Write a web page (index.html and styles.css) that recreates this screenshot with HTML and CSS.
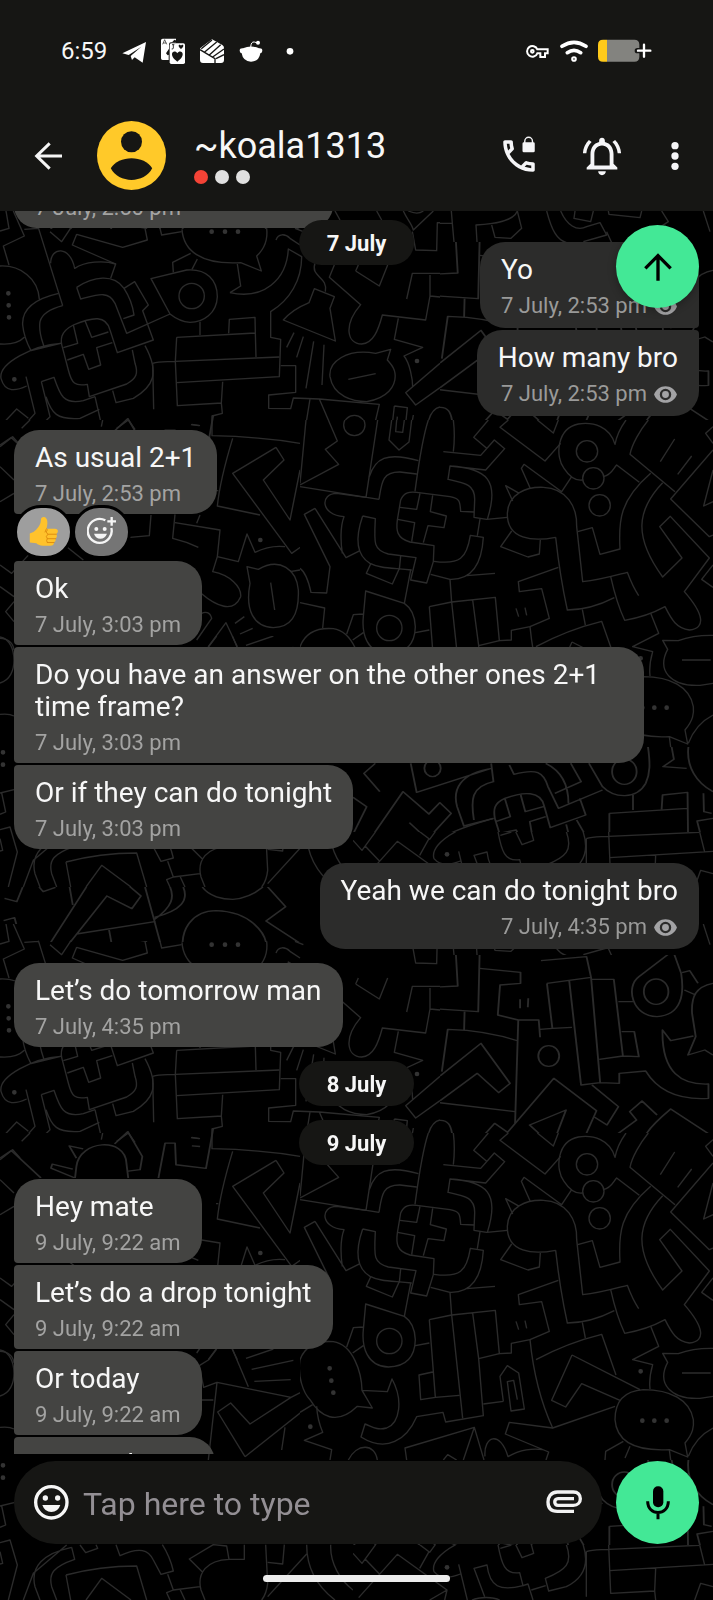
FILE: index.html
```html
<!DOCTYPE html>
<html lang="en">
<head>
    <meta charset="utf-8">
    <meta name="viewport" content="width=device-width, initial-scale=1">
    <title>~koala1313</title>
    <link rel="stylesheet" href="styles.css">
</head>
<body>
    <svg class="wallpaper" aria-hidden="true">
        <defs>
            <path id="frames" d="M270 722 L310 768 L290 806 L235 768 L134 942 L108 915 L190 741 M153 741 L160 795 M319 741 L340 845 L168 882 M340 845 L356 925 L400 908 M240 870 L247 922 L322 905 L320 940 L268 960 L160 935 L170 920 M403 741 C415 780 400 810 340 832 M372 735 C385 770 380 800 338 840 M445 741 C460 770 490 778 512 778 C545 775 570 750 578 741 M405 950 C390 860 430 812 475 812 C550 815 590 880 586 930 M585 735 L628 800 L585 843 L702 947 L730 905 M605 935 C610 920 618 918 627 924 L670 960 M10 775 L37 785 L50 741 M86 741 L95 755 L122 742 M8 842 L32 833 L47 910"/>
            <pattern id="doodles" patternUnits="userSpaceOnUse" x="0" y="211" width="713" height="713">
                <g transform="translate(0 -211)">
                <!-- bug, speech bubble, pin, boxes, lamp, compass -->
                <svg x="0" y="211" width="440" height="209" viewBox="0 33 1320 627">
                    <path d="M18 33 L27 85 L0 93 M40 33 L73 108 L10 138 L27 195 M73 88 L115 85 M115 83 L188 317 M152 190 C152 140 210 135 224 205 C255 185 310 180 347 192 L332 235"/>
                    <path d="M0 198 C60 195 115 235 118 298 M0 432 C40 435 60 425 73 412 M188 317 C150 327 125 345 120 365 C115 400 130 430 131 437 M176 280 C110 295 65 325 68 375 C72 415 92 450 93 452 L182 430 C100 435 -5 490 3 535 C15 580 50 572 80 558"/>
                    <path d="M230 262 C280 230 340 220 372 265 C395 300 400 330 402 345 L370 356 M230 262 L242 297 C290 285 325 270 345 310 L380 400 L510 342 M372 265 L404 245 L445 315 L428 332 L460 420 L352 458 L330 390 C318 345 280 350 220 375 C180 395 180 420 188 445 L205 510 C215 550 225 560 262 553 L268 590 L380 552 C410 535 415 520 405 490 L397 450"/>
                    <path d="M220 375 L233 430 L190 443 M255 362 L275 412 L325 396 M202 480 L250 463 L266 508 L302 495 L290 443 L337 428 M435 437 C480 520 460 560 400 595 L348 608 L338 572"/>
                    <path d="M78 530 L105 640 L65 685 M124 545 L150 650 L110 690 M124 545 L162 532 C180 585 190 615 250 602 L285 590 M138 590 C155 640 170 660 240 655 L298 628 M285 590 L308 690 M0 680 L50 627 L85 655"/>
                    <path d="M150 95 L185 125 L213 83 M230 103 L217 135 L347 192 M230 103 L368 142 L442 120 L435 85 M480 85 L485 105 L545 95"/>
                    <path d="M546 88 C550 150 600 195 722 188 L784 213 L770 168 C800 140 803 110 800 85 M572 160 L518 187 L520 217 M592 177 L576 208 M712 192 L722 258 L690 278"/>
                    <path d="M453 236 L560 210 C620 205 652 240 652 290 C650 340 610 367 570 367 C540 365 520 350 510 342 Z M690 278 C790 300 860 240 865 147 L905 170 C905 240 870 300 812 335 L812 412 L842 418 L838 530 L530 548"/>
                    <circle cx="575" cy="288" r="38"/>
                    <path d="M530 412 L766 399 M530 412 L526 484 L532 617 L665 609 M526 484 L838 471 M766 399 L768 471 M600 365 L600 405 M686 400 L688 358 L765 352 L766 399 M458 490 C480 484 500 486 526 484 M458 490 L461 628 M668 545 L664 609 L667 640 L636 648 L636 690"/>
                    <path d="M828 120 C835 100 855 100 870 115 L900 135 M885 85 L910 95 M945 190 C930 230 985 230 976 275 M943 266 L1003 290 L990 325 L1006 423 L850 360 C880 325 910 315 927 308 Z M882 398 L860 442 M910 410 L890 472 M941 424 L918 565 M972 434 L966 555"/>
                    <path d="M842 497 L887 497 L887 577 L806 585 L806 625 L872 626 L880 594 L958 597 L1138 613 L1120 690 M930 597 L915 690 M958 597 L998 690 M1005 33 L1020 60 M1130 33 L1145 60"/>
                    <circle cx="1063" cy="678" r="32"/>
                    <path d="M1003 195 L988 232 L1082 314 C1030 375 1040 430 1085 432 C1120 430 1135 390 1147 345 L1277 360 L1290 288 L1380 297 M1290 288 L1290 225 M1067 213 L1138 258 L1163 195 M1075 195 L1067 213 M1237 95 L1247 150 L1310 152 L1312 68 L1358 70 M1376 220 L1237 220 L1220 297 M1210 33 C1222 60 1235 70 1240 90 L1300 33 M1225 33 C1245 42 1260 40 1270 33"/>
                    <path d="M1172 448 L1127 460 C1040 445 985 485 990 530 C1000 590 1060 605 1100 605 C1160 595 1190 560 1185 520 C1183 500 1170 490 1162 480 Z M1045 538 L1127 521 M1195 355 L1183 418 L1268 442 L1212 468 C1230 490 1238 540 1238 560 M1320 490 L1217 578 L1247 615 L1320 563"/>
                    <path d="M1183 618 L1222 623 L1215 690 M1183 618 L1175 690 M1192 650 L1188 690 M1240 645 L1232 690 M1280 690 C1285 650 1300 625 1320 621"/>
                    <path class="dot" d="M25 280h0M26 316h0M27 352h0M43 538h0M635 95h0M675 95h0M714 95h0M1251 483h0"/>
                </svg>
                <svg x="45" y="211" width="285" height="18" viewBox="99 852 627 54" preserveAspectRatio="none">
                    <use href="#frames"/>
                </svg>
                <svg x="440" y="211" width="273" height="31" viewBox="0 33 819 93">
                    <path d="M0 70 L37 70 L34 33 M37 70 L42 126 M111 126 L108 75 C160 72 220 65 232 33 L245 85 L213 115 L165 112 L155 75 M320 33 C335 90 350 120 380 128 M362 33 C380 75 410 95 440 80 L480 68 L500 105 L430 125 M405 33 L402 55 L452 65 L460 33 M505 33 L507 43 L600 53 L605 33 M665 33 L685 65 L640 95 M500 95 L515 128 M790 33 L810 95"/>
                </svg>
                <!-- books, hill, diamond, pin -->
                <svg x="440" y="242" width="273" height="178" viewBox="968 45 600 534" preserveAspectRatio="none">
                    <path d="M1003 45 L1007 138 L945 142 M1055 45 L1052 215 L945 205 M1022 215 L1021 270 M1190 62 L1290 50 L1300 112 M1203 130 L1300 112 M1300 118 L1350 118 L1370 348 L1318 358 M1203 130 L1215 265 L1258 262 M1252 122 L1278 435 L1320 428 L1300 112 M1320 428 L1362 430 L1362 400 L1420 393 C1450 460 1500 480 1558 475 L1558 432 C1500 435 1455 400 1457 270 L1475 302 L1525 288 M1370 348 L1405 350 L1395 275 L1367 275 M1360 185 L1392 185"/>
                    <path d="M1480 32 L1405 110 C1375 140 1390 230 1445 230 C1500 225 1505 160 1498 100 Z M1500 98 L1517 92 L1535 130 M1505 150 L1530 165 M1568 130 C1530 140 1520 170 1522 220 L1530 290 L1513 345 L1550 330 L1568 345"/>
                    <ellipse cx="1443" cy="155" rx="27" ry="38"/>
                    <path d="M1055 85 L1145 97 L1145 130 L1100 135 L1095 225 L1140 240 L1185 240 L1188 292 M1188 268 L1215 265 M1144 178 L1144 205 M1162 175 L1161 202 M1140 240 L1133 550 M1140 303 C1090 280 1040 270 985 268 L972 395 M960 487 L1133 515 M968 408 L1058 310 L1122 430 L1097 458 L1050 400 L968 482"/>
                    <ellipse cx="1207" cy="348" rx="23" ry="31"/>
                    <path d="M1218 415 L1312 512 L1275 625 L1197 700 L1102 600 Z M1165 555 L1245 510 L1215 617 Z M1302 435 L1360 500 L1335 555 L1308 532 M1340 600 L1400 540 L1385 515 L1412 483 L1445 525 M1568 590 L1475 507 C1455 530 1430 560 1420 585 M1125 585 L1088 550 L1065 585 M968 541 C985 540 992 555 995 585"/>
                </svg>
                <!-- ring beetle, bird, clover, pencil, speech bubbles -->
                <svg x="300" y="420" width="413" height="327" viewBox="0 0 1239 981">
                    <path d="M18 0 L0 190 M85 0 L112 63 L76 88 L116 133 L0 195 M0 200 L237 238 M233 0 L198 232 M275 0 L267 60 L297 90 L327 66 L335 0 M290 0 L287 35 L308 37 L313 0"/>
                    <circle cx="163" cy="15" r="32"/>
                    <path d="M208 170 C225 115 260 95 355 122 M385 0 C365 60 355 140 345 214 M237 238 C245 190 245 155 300 156 L350 162 M460 0 C465 40 463 70 460 95 M430 95 L542 106 L583 60 L614 86 L557 150 L450 138 L444 178 C500 190 525 195 524 240 L522 292 L560 298 L622 292 M450 138 C560 145 600 180 562 298"/>
                    <path d="M198 232 L110 220 C60 220 60 285 132 290 C120 320 122 370 127 400 M45 265 L13 283 L90 440 L80 519 L33 517 C25 480 15 455 0 445 M45 265 L138 413 L180 392"/>
                    <path d="M188 288 L226 296 C222 370 220 390 265 402 L348 413 L332 480 L380 489 L400 425 L402 377 L330 366 C290 355 288 330 292 300 L302 240 C312 215 330 215 350 217 L450 230 C480 235 480 245 482 274 L522 276 M188 288 C170 340 160 400 210 430 C240 445 270 443 335 450"/>
                    <path d="M300 262 L350 268 L360 220 M293 298 L344 308 L335 365 M398 226 L391 275 L439 288 L432 323 L384 317 L370 368 M540 297 L532 347 M402 424 C480 435 500 415 511 346 L550 352 C545 440 510 480 450 478 L392 463 M500 467 L585 460 M450 478 L455 548 M302 408 L298 448 M213 430 L199 460 L277 492 L297 448 M332 450 L313 550"/>
                    <path d="M197 513 L313 550 C335 565 345 590 346 620 C345 660 330 700 265 702 C200 700 185 640 190 590 Z M190 582 L160 584 L140 642 M190 638 L158 660 M346 638 L388 630 M0 548 L74 564 L68 624"/>
                    <circle cx="268" cy="624" r="38"/>
                    <path d="M0 680 C15 640 50 622 100 626 C160 635 185 720 186 772 L217 825 L172 820 C110 880 60 850 30 800 C10 780 -8 730 0 680 M186 772 L262 776 L276 738 C310 800 300 870 260 885 C230 893 215 880 195 873 L183 912 C260 960 320 920 350 851 L429 838 L437 867 L550 848 L536 677 L598 662"/>
                    <path d="M388 560 L455 546 L586 532 L598 662 L634 660 L634 631 L690 620 L748 595 L725 506 L658 515 L655 485 L775 442 M388 560 L406 793 M455 546 L488 856 M518 540 L536 677 M406 793 L478 787 M398 717 L357 726 L362 800 L406 793 M648 565 L656 590 M675 563 L680 586"/>
                    <path d="M767 352 C700 365 620 360 622 280 C625 220 680 200 730 202 C800 205 832 260 830 320 L848 485 C900 480 950 465 982 457 Q998 500 1016 527 M767 352 Q780 470 802 570 C850 570 900 555 943 533 M658 220 L617 197 L638 243 M690 203 L664 145 L672 133 L785 215 L815 170 M635 333 L602 380 L684 411 L718 402 L721 360"/>
                    <path d="M978 0 C960 25 950 45 945 73 C930 20 880 5 835 12 C770 25 765 110 792 145 C815 180 835 182 848 180 M910 170 C935 165 940 145 950 135 L1018 187 M1045 0 C1020 30 995 75 990 103 L1125 215 M1239 90 L1112 237 L1228 350 L1239 345"/>
                    <circle cx="861" cy="94" r="32"/>
                    <circle cx="880" cy="175" r="32"/>
                    <circle cx="899" cy="256" r="32"/>
                    <path d="M1052 160 C960 240 955 300 960 387 L900 403 L877 323 L833 335 M1088 188 C1010 270 1000 350 1088 471 L1146 414 L1079 320 L1111 289 L1228 414 L1153 515 C1210 580 1220 625 1168 630 C1130 625 1115 600 1095 560 Q1040 590 974 601 Q950 550 932 470 M1081 125 L1124 57 M1133 163 L1175 108 M1239 150 L1211 258 L1239 245 M1239 435 L1205 478 L1239 502 M1239 70 L1217 40 L1239 20"/>
                    <path d="M625 0 L600 22 L735 123 L782 70 M712 0 L760 39 L775 0 M565 0 L521 52 L560 85 M847 568 L856 615 M708 680 Q800 630 905 604 L948 726 M690 620 Q705 770 758 885 L945 820 M1052 580 L1076 640 L998 680 L1058 695 C1048 730 1048 750 1050 768 M1239 646 Q1180 645 1135 662 L1088 661 L1103 688 C1070 750 1110 800 1200 796 L1239 790 M1146 720 L1232 720 M816 666 L1020 770 M816 666 L755 802 L797 822 L845 752 L960 802"/>
                    <path d="M1155 930 C1180 900 1182 880 1180 860 C1170 800 1110 770 1030 770 C960 775 945 820 945 860 C950 930 1010 955 1108 950 L1163 972 Z M610 805 L600 730 L622 698 L656 720 L673 828 L633 834 L622 746 L641 742 L652 800 M550 813 L610 805"/>
                    <path d="M0 838 L38 815 M50 820 Q52 860 68 898 L13 922 L95 950 L90 981 M490 981 L523 883 L315 945 L320 981 M523 883 L552 981 M555 970 C550 910 600 890 624 971 C660 950 700 945 728 950 M738 981 L746 957 L616 903 L628 868 L758 885 M430 981 L443 965 L470 981 M145 981 C170 930 225 930 232 981 M915 981 L917 955 L970 925 M990 940 L975 975 M1108 950 L1112 981 M1165 970 C1180 930 1210 900 1239 885"/>
                    <path class="dot" d="M89 706h0M94 743h0M100 779h0M1022 715h0M1027 863h0M1063 863h0M1100 863h0M31 881h0"/>
                </svg>
                <!-- trousers, key, compass -->
                <svg x="0" y="420" width="300" height="240" viewBox="0 0 900 720">
                    <path d="M308 0 L304 20 M350 25 L385 0 L405 28 M65 25 L90 0 M0 80 L38 50 L60 75 M636 0 L636 47 Q780 50 900 70 M698 55 Q660 180 652 258 L780 285 M575 13 L600 17 M648 212 L655 212 M828 82 L698 160 L875 400 L915 372 M828 82 L852 120 L790 180 L870 300 L900 150"/>
                    <path d="M600 285 L590 310 M525 283 L518 355 Q560 365 595 382 M525 308 L660 330 L652 410 L715 425 L741 342 L765 397 Q810 375 855 380 M652 410 L638 455 C690 465 725 500 722 530 C700 580 650 560 603 520 M390 352 L448 347 L453 285 M741 440 L775 448 C840 410 890 450 895 510 C898 590 870 622 820 623 C760 620 735 570 750 490 Z M812 488 L824 570 M870 455 L900 450"/>
                    <path d="M590 660 L635 595 C630 575 615 575 605 580 M625 680 L678 608 L712 680 M705 610 L733 590 M720 642 L758 625 M0 140 L42 180 M0 245 L42 220 M0 435 L35 460 L90 400 M0 500 L42 530 M42 545 L17 575 L42 605 M0 655 C25 655 40 670 42 690 M200 380 L250 420"/>
                    <path class="dot" d="M781 360h0"/>
                </svg>
                <svg x="0" y="407" width="216" height="58" viewBox="0 540 475 175" preserveAspectRatio="none">
                    <path d="M165 715 L168 680 C175 600 275 590 278 670 L282 715 M183 627 L152 618 L168 655 M160 688 L115 673 L112 685 L165 715 M252 612 L281 575 L313 650 L308 690 L282 694 M348 718 L363 610 L385 610 L387 675 L453 686 L469 565 M420 593 L438 596 M422 618 L440 620 M0 655 L25 632 L90 715"/>
                </svg>
                <svg x="0" y="636" width="300" height="111" viewBox="0 357 900 333">
                    <path d="M738 385 L820 357 M755 418 L880 391 M763 454 L872 449 M697 357 L745 470 M593 410 L625 390 L650 357 M598 410 L611 472 L651 457 L873 502 L910 483 M651 457 L625 690 M600 510 L640 510 M873 502 L750 582 L692 519 L653 546 L735 680 M935 522 L735 680 M855 592 L845 660 M0 360 C30 365 42 400 42 430 C42 460 30 490 0 498 M0 592 C20 590 35 593 42 597"/>
                </svg>
                <!-- picture frame, cat, stack -->
                <svg x="0" y="747" width="353" height="140" viewBox="0 120 1059 420">
                    <path d="M0 258 L42 248 M5 258 L17 315 L0 322 M0 368 L30 360 L52 435 L25 540 M0 395 L8 430 L0 432 M215 382 L224 418 C160 440 145 460 155 500 L170 540 M215 382 C130 400 90 440 105 500 L120 540 M70 540 L100 460 L200 375 M240 375 L257 398 L293 385 L288 374 M198 465 Q300 438 410 438 L440 540 M198 465 L212 540 M258 540 L305 475 L393 540 M348 374 L360 407 C420 380 445 390 460 420 L483 463 L520 453 Q510 410 487 374"/>
                    <path d="M503 463 L520 510 L500 518 L510 540 M540 508 L555 540 M520 510 L600 500 M608 457 L568 417 L640 374 L680 378 L687 418 L733 418 L733 374 M687 418 C620 420 590 460 603 510 L615 540 M797 374 L803 490 Q800 520 785 540 M853 374 L848 432 L803 427 M920 374 C920 430 940 490 1005 540 M992 374 C990 430 1020 480 1059 510 M920 402 L803 530"/>
                    <path class="dot" d="M9 136h0M9 173h0"/>
                </svg>
                <svg x="353" y="747" width="360" height="85" viewBox="776 321 792 255" preserveAspectRatio="none">
                    <path d="M825 370 L800 400 L835 455 M776 472 L806 500 L768 605 L797 630 L886 455 L943 522 L967 488 L992 520 L940 598 L900 548 M903 370 L916 457 L1080 385 M1080 370 L1085 425 C1035 440 1035 480 1042 540 M1082 385 C1010 400 995 450 1005 500 L1020 558 L1085 535"/>
                    <ellipse cx="951" cy="385" rx="18" ry="25"/>
                    <path d="M1120 375 L1130 403 C1180 385 1195 395 1205 440 L1228 505 L1325 450 M1200 370 C1230 390 1250 430 1250 490 M1255 370 L1278 425 L1220 460 M1275 475 L1288 525 L1210 563 L1197 500 C1190 450 1150 455 1110 475 C1085 490 1085 510 1088 535 L1105 610 M1110 475 L1122 530 L1090 545 M1145 465 L1155 515 L1195 500 M1098 580 L1135 570 L1150 612 M1172 600 L1165 545 L1200 530 M1268 540 L1285 580 M1245 553 L1250 580 M1085 535 C1060 545 1020 560 990 580"/>
                    <path d="M1295 370 L1325 440 C1350 475 1400 480 1420 430 C1430 400 1430 370 1425 321 M1392 465 L1392 510 M1455 508 L1457 465 L1512 457 L1513 576 M1340 520 L1512 505 M1340 520 L1340 580 M1568 225 C1500 260 1490 400 1568 455 M1547 460 L1548 515 L1565 520 M1568 535 L1533 543 L1540 580 M1477 321 L1482 358 L1458 380 L1510 385"/>
                    <ellipse cx="1373" cy="395" rx="27" ry="38"/>
                </svg>
                <svg x="353" y="832" width="360" height="55" viewBox="0 375 1080 165">
                    <path d="M767 375 L773 520 L905 513 M700 395 C720 388 740 390 767 388 L1038 376 M700 395 L700 530 M770 452 L1080 433 M1040 375 L1055 435 M908 445 L905 513 L908 540 M685 360 C710 420 700 470 640 500 L587 513 L577 475 C640 450 660 430 640 374 M488 374 L507 413 L542 400 L535 374 M435 374 C445 430 455 465 500 458 L510 497 C440 515 410 500 402 435 L363 445 L395 530 M442 385 L475 375"/>
                    <path d="M308 374 C260 400 235 430 243 455 C260 475 290 475 322 462 M317 433 L343 540 M535 510 L578 497 M510 497 L525 492 L540 540 M357 540 C380 530 420 530 440 540 M275 540 L282 510 L133 403 L17 533 M282 510 L230 540 M0 400 L27 430 L68 374 M37 418 L80 463 M200 374 L230 397 L247 374 M228 395 L200 445 M1080 500 L1043 490 L1025 540"/>
                    <path class="dot" d="M282 442h0"/>
                </svg>
                <svg x="0" y="887" width="713" height="37" viewBox="0 741 1568 111" preserveAspectRatio="none">
                    <use href="#frames"/>
                </svg>
                </g>
            </pattern>
        </defs>
        <rect width="100%" height="100%" fill="url(#doodles)"/>
    </svg>

    <header class="header">
        <div class="status">
            <span class="clock">6:59</span>
            <div class="status-icons">
                <svg width="24" height="26" viewBox="0 0 72 78"><path fill="#fff" d="M1 46 72 12 62 74 38 58 30 66 26 54 58 26 20 51Z"/></svg>
                <svg width="24" height="26" viewBox="0 0 72 78">
                    <path fill="#fff" d="M5 2h40v11H30q-6 0-6 6v13l-9 14 5 6 3-2v16H5q-5 0-5-5V7q0-5 5-5Z"/>
                    <path fill="none" stroke="#161614" stroke-width="2" d="M5 19 11 5 17 19M7 15h9"/>
                    <path fill="#161614" d="M36 10q5-8 9-2l3 5H33Z"/>
                    <rect x="26" y="16" width="46" height="62" rx="5" fill="#fff"/>
                    <path fill="#161614" d="M49 71C35 60 33 54 33 48c0-9 12-10 16-2 4-8 16-7 16 2 0 6-2 12-16 23ZM60 33c-8-6-9-13-4-13q3 0 4 3 1-3 4-3c5 0 4 7-4 13Z"/>
                    <path fill="none" stroke="#161614" stroke-width="2.500" d="M33 20h7M37 20v10q0 4-5 3"/>
                </svg>
                <svg width="24" height="26" viewBox="0 0 72 78">
                    <path fill="#fff" d="M5 27 36 4 67 21q5 3 5 9v36q0 9-9 9H9q-9 0-9-9V34q0-5 5-7Z"/>
                    <path fill="none" stroke="#161614" stroke-width="4" d="M0 35 45 62 45 78M14 42 50 12M28 51 62 20M38 57 72 33M4 32 36 6M48 62 72 50"/>
                </svg>
                <svg width="24" height="26" viewBox="0 0 72 78">
                    <path fill="#fff" d="M2 38q0-8 10-7 24-11 48 0 10-1 10 7 0 6-6 8-4 25-28 25T8 46q-6-2-6-8Z"/>
                    <path fill="none" stroke="#fff" stroke-width="3" d="M35 28Q36 10 46 12l10 3"/>
                    <circle cx="57" cy="14" r="6" fill="#fff"/>
                </svg>
                <svg width="24" height="26" viewBox="0 0 72 78"><circle cx="36" cy="40" r="10" fill="#fff"/></svg>
            </div>
            <div class="system-icons">
                <svg width="24" height="24" viewBox="0 0 72 72" fill="none" stroke="#fff" stroke-width="6">
                    <path d="M34 31A16 16 0 1 0 34 43H43V54H57V43H65V31Z"/>
                    <circle cx="19" cy="37" r="4"/>
                </svg>
                <svg width="28" height="24" viewBox="0 0 84 72" fill="none" stroke="#fff" stroke-width="11" stroke-linecap="round">
                    <path d="M6 22Q42-2 78 22M22 41Q42 27 62 41"/>
                    <circle cx="42" cy="60" r="3"/>
                </svg>
                <svg width="54" height="24" viewBox="0 0 162 72">
                    <path fill="#ffca1a" d="M27 2H15Q0 2 0 17v36q0 15 15 15h12Z"/>
                    <path fill="#83837f" d="M27 2h82q15 0 15 15v36q0 15-15 15H27Z"/>
                    <path stroke="#161614" stroke-width="16" stroke-linecap="round" d="M118 35h37M138 17v36"/>
                    <path stroke="#fff" stroke-width="7" stroke-linecap="round" d="M120 35h37M138 17v36"/>
                </svg>
            </div>
        </div>
        <div class="appbar">
            <button class="back" type="button" aria-label="Back">
                <svg width="28" height="28" viewBox="0 0 84 84" fill="none" stroke="#f5f5f5" stroke-width="9"><path d="M84 42H8M47 4 8 42l39 38"/></svg>
            </button>
            <svg class="avatar" width="69" height="69" viewBox="0 0 210 210">
                <circle cx="105" cy="105" r="105" fill="#ffc929"/>
                <circle cx="105" cy="63" r="32" fill="#161614"/>
                <path fill="#161614" d="M42 144C65 103 145 103 168 144 145 191 65 191 42 144Z"/>
            </svg>
            <div class="contact">
                <h1>~koala1313</h1>
                <div class="trust"><i class="on"></i><i></i><i></i></div>
            </div>
            <div class="actions">
                <button type="button" aria-label="Call">
                    <svg width="42" height="42" viewBox="0 0 24 24" fill="#f5f5f7">
                        <path d="M6.540 5c.06.89.21 1.760.45 2.590l-1.200 1.200c-.41-1.200-.67-2.470-.76-3.790h1.510m9.860 12.020c.85.24 1.720.39 2.600.45v1.490c-1.320-.09-2.590-.35-3.800-.75l1.200-1.190M7.500 3H4c-.55 0-1 .45-1 1 0 9.390 7.610 17 17 17 .55 0 1-.45 1-1v-3.490c0-.55-.45-1-1-1-1.240 0-2.450-.2-3.570-.57-.1-.04-.21-.05-.31-.05-.26 0-.51.1-.71.29l-2.200 2.200c-2.830-1.450-5.150-3.760-6.590-6.590l2.200-2.200c.28-.28.36-.67.25-1.020C8.700 6.450 8.500 5.250 8.500 4c0-.55-.45-1-1-1z"/>
                        <rect x="14" y="4.200" width="7" height="5.700" rx=".8"/>
                        <path fill="none" stroke="#f5f5f7" stroke-width=".8" d="M15.300 4.500V3.500a2.200 2.200 0 0 1 4.400 0v1"/>
                    </svg>
                </button>
                <button type="button" aria-label="Notifications">
                    <svg width="46" height="46" viewBox="0 0 24 24" fill="#f5f5f7"><path d="M12 22c1.100 0 2-.9 2-2h-4c0 1.100.9 2 2 2zm6-6v-5c0-3.070-1.630-5.640-4.500-6.320V4c0-.83-.67-1.500-1.500-1.500s-1.500.67-1.500 1.500v.68C7.640 5.360 6 7.920 6 11v5l-2 2v1h16v-1l-2-2zm-2 1H8v-6c0-2.480 1.510-4.500 4-4.500s4 2.020 4 4.500v6zM6.580 4.680L5.150 3.650C3.350 5.480 2.170 7.900 2.030 10.500h1.800c.15-2.250 1.310-4.370 2.750-5.820zm13.590 5.820h1.800c-.15-2.600-1.330-5.020-3.120-6.850l-1.420 1.030c1.420 1.450 2.590 3.570 2.740 5.820z"/></svg>
                </button>
                <button class="more" type="button" aria-label="More options">
                    <svg width="8" height="28" viewBox="0 0 24 84" fill="#f5f5f7"><circle cx="12" cy="11" r="11"/><circle cx="12" cy="42" r="11"/><circle cx="12" cy="73" r="11"/></svg>
                </button>
            </div>
        </div>
    </header>

    <svg width="0" height="0" class="sprite" aria-hidden="true">
        <symbol id="eye" viewBox="0 0 24 24">
            <path d="M12 4C7 4 2.730 7.110 1 12c1.730 4.890 6 8 11 8s9.270-3.110 11-8c-1.730-4.890-6-8-11-8zm0 13.500a5.500 5.500 0 1 1 0-11 5.500 5.500 0 0 1 0 11zm0-8.800a3.300 3.300 0 1 0 0 6.600 3.300 3.300 0 0 0 0-6.600z"/>
        </symbol>
        <symbol id="smile" viewBox="0 0 105 105">
            <circle cx="52" cy="52" r="47" fill="none" stroke="currentColor" stroke-width="10"/>
            <circle cx="34" cy="39" r="8"/>
            <circle cx="71" cy="39" r="8"/>
            <path d="M25 60h54q-7 21-27 21T25 60Z"/>
        </symbol>
    </svg>

    <main class="chat">
        <div class="messages">
            <section class="group in">
                <article class="bubble scrolled"><time>7 July, 2:50 pm</time></article>
            </section>
            <section class="group out">
                <article class="bubble"><p>Yo</p><time>7 July, 2:53 pm <svg class="seen"><use href="#eye"/></svg></time></article>
                <article class="bubble"><p>How many bro</p><time>7 July, 2:53 pm <svg class="seen"><use href="#eye"/></svg></time></article>
            </section>
            <section class="group in">
                <article class="bubble"><p>As usual 2+1</p><time>7 July, 2:53 pm</time></article>
                <div class="reactions">
                    <button class="picked" type="button" aria-label="Thumbs up">
                        <svg width="29" height="30" viewBox="0 0 90 94">
                            <path fill="#ffc22b" d="M2 52q12-3 20-12 14-13 15-31Q37 0 46 0c12 1 14 19 8 37h27q9 1 9 8 0 6-5 8 5 9-2 14 2 8-5 12 0 11-12 11H43q-15-2-20-8L2 80Z"/>
                            <path fill="none" stroke="#de8b10" stroke-width="3" stroke-linecap="round" d="M54 37 50 47M59 54h26M57 68h26M57 80h21M58 40q-9 6 1 14-9 7-2 14-5 6 0 12"/>
                        </svg>
                    </button>
                    <button type="button" aria-label="Add reaction">
                        <svg width="30" height="30" viewBox="0 0 90 90" fill="#f5f5f5">
                            <path fill="none" stroke="#f5f5f5" stroke-width="7" d="M55 10A36 36 0 1 0 73 33M74 0v26M61 13h26"/>
                            <circle cx="28" cy="36" r="6"/><circle cx="53" cy="36" r="6"/>
                            <path d="M21 50h39q-6 15-20 15T21 50Z"/>
                        </svg>
                    </button>
                </div>
                <article class="bubble"><p>Ok</p><time>7 July, 3:03 pm</time></article>
                <article class="bubble"><p>Do you have an answer on the other ones 2+1 time frame?</p><time>7 July, 3:03 pm</time></article>
                <article class="bubble"><p>Or if they can do tonight</p><time>7 July, 3:03 pm</time></article>
            </section>
            <section class="group out">
                <article class="bubble"><p>Yeah we can do tonight bro</p><time>7 July, 4:35 pm <svg class="seen"><use href="#eye"/></svg></time></article>
            </section>
            <section class="group in">
                <article class="bubble"><p>Let’s do tomorrow man</p><time>7 July, 4:35 pm</time></article>
            </section>
            <div class="date">8 July</div>
            <div class="date">9 July</div>
            <section class="group in">
                <article class="bubble"><p>Hey mate</p><time>9 July, 9:22 am</time></article>
                <article class="bubble"><p>Let’s do a drop tonight</p><time>9 July, 9:22 am</time></article>
                <article class="bubble"><p>Or today</p><time>9 July, 9:22 am</time></article>
                <article class="bubble"><p>Let me know</p><time>9 July, 9:22 am</time></article>
            </section>
        </div>
        <div class="date current">7 July</div>
        <button class="round scroll-up" type="button" aria-label="Scroll up">
            <svg width="28" height="28" viewBox="0 0 84 84" fill="none" stroke="#000" stroke-width="10"><path d="M42 83V8M4 46 42 8l38 38"/></svg>
        </button>
    </main>

    <form class="composer">
        <div class="field">
            <button type="button" aria-label="Emoji"><svg class="emoji"><use href="#smile"/></svg></button>
            <input type="text" placeholder="Tap here to type" aria-label="Message">
            <button type="button" aria-label="Attach file">
                <svg width="36" height="26" viewBox="0 0 108 78" fill="none" stroke="#f2f2f2" stroke-width="10"><path d="M84 64H34C12 64 6 50 6 36S14 6 34 6H82C96 6 103 15 103 26S95 46 82 46H36C23 46 23 26 36 26H84"/></svg>
            </button>
        </div>
        <button class="round" type="button" aria-label="Record voice message">
            <svg width="24" height="34" viewBox="0 0 72 102"><rect x="21" y="1" width="31" height="63" rx="15"/><path fill="none" stroke="#000" stroke-width="9" d="M5 46C5 91 67 91 67 46M36 79V100"/></svg>
        </button>
    </form>
    <div class="home"></div>
</body>
</html>
```
FILE: styles.css
```css
* {
  box-sizing: border-box;
}
body {
  margin: 0;
  height: 100vh;
  display: flex;
  flex-direction: column;
  overflow: hidden;
  background-color: #000;
  color: #f7f7f7;
  font-family: Roboto, "Liberation Sans", sans-serif;
}
button {
  display: flex;
  align-items: center;
  justify-content: center;
  padding: 0;
  border: 0;
  background: none;
  color: inherit;
}
svg {
  display: block;
  flex: none;
}

/* doodle wallpaper */
.wallpaper {
  position: fixed;
  top: 0;
  left: 0;
  z-index: -1;
  width: 100%;
  height: 100%;
}
.wallpaper path,
.wallpaper circle,
.wallpaper ellipse {
  fill: none;
  stroke: #2b2b2b;
  stroke-width: 4;
  stroke-linejoin: round;
}
.wallpaper .dot {
  stroke: #333;
  stroke-width: 14;
  stroke-linecap: round;
}
.sprite {
  position: absolute;
}

/* header */
.header {
  flex: none;
  background-color: #161614;
}
.status {
  display: flex;
  align-items: center;
  height: 100px;
  padding: 2px 61px 0;
}
.clock {
  font-size: 24px;
  line-height: 28px;
}
.status-icons {
  display: flex;
  gap: 15px;
  margin-left: 15px;
}
.system-icons {
  display: flex;
  align-items: center;
  gap: 10px;
  margin-left: auto;
}
.appbar {
  display: flex;
  align-items: center;
  height: 111px;
  padding: 0 25px 0 34px;
}
.avatar {
  margin-left: 35px;
}
.contact {
  flex: 1;
  min-width: 0;
  margin-left: 28px;
}
.contact h1 {
  margin: 0;
  overflow: hidden;
  font-size: 36px;
  font-weight: 400;
  line-height: 40px;
  white-space: nowrap;
  text-overflow: ellipsis;
}
.trust {
  display: flex;
  gap: 7px;
  padding: 4px 0 2px;
}
.trust i {
  width: 14px;
  height: 14px;
  border-radius: 50%;
  background-color: #e0e0e0;
}
.trust .on {
  background-color: #f44336;
}
.actions {
  display: flex;
  gap: 37px;
}
.actions button {
  width: 46px;
  height: 46px;
}
.actions .more {
  width: 26px;
}

/* messages */
.chat {
  position: relative;
  flex: 1;
  min-height: 0;
  overflow: hidden;
}
.messages {
  display: flex;
  flex-direction: column;
  gap: 14px;
  margin-top: -28px;
  padding: 0 14px;
}
.group {
  display: flex;
  flex-direction: column;
  align-items: flex-start;
  gap: 2px;
}
.group.out {
  align-items: flex-end;
}
.bubble {
  max-width: 92%;
  padding: 12px 21px 7px;
  border-radius: 4px 25px 25px 4px;
  background-color: #444442;
}
.bubble:first-child {
  border-top-left-radius: 25px;
}
.bubble:last-child {
  border-bottom-left-radius: 25px;
}
.bubble.scrolled {
  min-width: 319px;
}
.out .bubble {
  padding-bottom: 9px;
  border-radius: 25px 4px 4px 25px;
  background-color: #2c2c2b;
}
.out .bubble:first-child {
  border-top-right-radius: 25px;
}
.out .bubble:last-child {
  border-bottom-right-radius: 25px;
}
.bubble p {
  margin: 0 0 7px;
  font-size: 28px;
  line-height: 32px;
}
.bubble time {
  display: flex;
  align-items: center;
  gap: 6px;
  font-size: 22px;
  line-height: 26px;
  color: #a3a3a2;
}
.out .bubble time {
  justify-content: flex-end;
  color: #9a9a99;
}
.seen {
  width: 25px;
  height: 25px;
  fill: #a3a3a5;
}
.reactions {
  display: flex;
  margin-top: -11px;
}
.reactions button {
  width: 59px;
  height: 54px;
  border: 3px solid #000;
  border-radius: 27px;
  background-color: #757575;
}
.reactions .picked {
  margin-right: -1px;
  background-color: #9e9e9e;
}
.date {
  align-self: center;
  padding: 2px 28px 0;
  border-radius: 23px;
  background-color: #161614;
  font-size: 22px;
  font-weight: 700;
  line-height: 43px;
}
.date.current {
  position: absolute;
  top: 9px;
  left: 50%;
  transform: translateX(-50%);
}
.round {
  flex: none;
  width: 83px;
  height: 83px;
  border-radius: 50%;
  background-color: #43e896;
}
.scroll-up {
  position: absolute;
  top: 14px;
  right: 14px;
  box-shadow: 0 2px 8px rgba(0,0,0,.3);
}

/* composer */
.composer {
  display: flex;
  flex: none;
  gap: 14px;
  padding: 7px 14px 0;
}
.field {
  display: flex;
  flex: 1;
  align-items: center;
  min-width: 0;
  padding: 0 20px;
  border-radius: 42px;
  background-color: #161614;
}
.emoji {
  width: 35px;
  height: 35px;
  fill: #f5f5f5;
}
.field input {
  flex: 1;
  min-width: 0;
  padding: 2px 14px 0;
  border: 0;
  outline: 0;
  background: none;
  color: #f7f7f7;
  font-family: inherit;
  font-size: 32px;
}
.field input::placeholder {
  color: #938f94;
  opacity: 1;
}
.home {
  flex: none;
  align-self: center;
  width: 187px;
  height: 7px;
  margin: 31px 0 18px;
  border-radius: 4px;
  background-color: #ececec;
}
```
